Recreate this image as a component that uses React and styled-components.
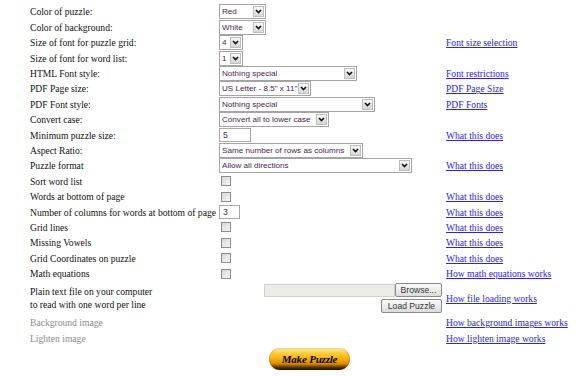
import React from "react";
import styled, { createGlobalStyle } from "styled-components";

const Global = createGlobalStyle`
  html, body { margin: 0; padding: 0; background: #fff; }
  body { font-family: "Liberation Serif", "Times New Roman", serif; }
`;

const Page = styled.div`
  width: 580px;
  height: 376px;
  box-sizing: border-box;
  padding: 4.3px 0 0 30px;
  overflow: hidden;
`;

const Form = styled.div`
  display: flex;
  flex-direction: column;
`;

const Row = styled.div`
  display: grid;
  grid-template-columns: 189px 227px 1fr;
  align-items: center;
  height: ${(p) => p.$h || 15.4}px;
`;

const Label = styled.div`
  font-size: 9.6px;
  line-height: 13px;
  color: ${(p) => (p.$muted ? "#8a8a8a" : "#111")};
  white-space: nowrap;
`;

const Cell = styled.div`
  display: flex;
  align-items: center;
`;

const Link = styled.a`
  font-size: 9.6px;
  color: #2a22f5;
  text-decoration: underline;
  white-space: nowrap;
  cursor: pointer;
`;

const SelectBox = styled.div`
  display: inline-flex;
  align-items: center;
  box-sizing: border-box;
  width: ${(p) => p.$w}px;
  height: 15px;
  border: 1px solid #a4a4a4;
  background: #fff;
  padding: 0 1px 0 2px;
  font: 8.1px "Liberation Sans", Arial, sans-serif;
  color: #4d2450;
`;

const SelectText = styled.span`
  flex: 1;
  white-space: nowrap;
  overflow: hidden;
`;

const ArrowBtn = styled.span`
  display: flex;
  flex: none;
  align-items: center;
  justify-content: center;
  box-sizing: border-box;
  width: 11px;
  height: 11px;
  border: 1px solid #bdbdbd;
  background: linear-gradient(#f8f8f8, #d6d6d6);
`;

const TextBox = styled.div`
  box-sizing: border-box;
  width: ${(p) => p.$w}px;
  height: 14px;
  border: 1px solid #a8a8a8;
  background: #fff;
  padding-left: 3px;
  font: 8.6px/12px "Liberation Sans", Arial, sans-serif;
  color: #4d2450;
`;

const Check = styled.span`
  display: inline-block;
  box-sizing: border-box;
  width: 10px;
  height: 10px;
  margin-left: 2px;
  border: 1px solid #8d8d8d;
  background: linear-gradient(135deg, #d8d8d8, #f6f6f6);
`;

const FileCell = styled.div`
  display: flex;
  flex-direction: column;
  align-items: flex-end;
  gap: 2px;
  padding-right: 4px;
`;

const FileLine = styled.div`
  display: flex;
  align-items: center;
`;

const FileField = styled.div`
  box-sizing: border-box;
  width: 131px;
  height: 13px;
  border: 1px solid #cfcfcb;
  background: #ecebe6;
`;

const GrayButton = styled.button`
  box-sizing: border-box;
  width: ${(p) => p.$w}px;
  height: 14px;
  padding: 0;
  border: 1px solid #8a8a8a;
  border-radius: 2px;
  background: linear-gradient(#fbfbfb, #dcdcdc);
  font: 8.6px "Liberation Sans", Arial, sans-serif;
  color: #333;
`;

const Footer = styled.div`
  display: flex;
  padding: 2.3px 0 0 239px;
`;

const MakeButton = styled.button`
  width: 81px;
  height: 22px;
  padding: 0 0 1px 0;
  border: none;
  border-radius: 11px;
  background: linear-gradient(
    to bottom,
    #fff1a8 0%,
    #ffd040 22%,
    #f8ab0c 52%,
    #d98a00 72%,
    #5a3200 88%,
    #140a00 100%
  );
  box-shadow: inset 0 0 2px rgba(120, 70, 0, 0.5);
  font: italic 900 11px "Liberation Serif", "Times New Roman", serif;
  color: #000;
  letter-spacing: -0.2px;
`;

const Chevron = () => (
  <svg width="7" height="5" viewBox="0 0 7 5">
    <path d="M1 1 L3.5 3.6 L6 1" fill="none" stroke="#111" strokeWidth="1.6" />
  </svg>
);

const Select = ({ w, children }) => (
  <SelectBox $w={w}>
    <SelectText>{children}</SelectText>
    <ArrowBtn>
      <Chevron />
    </ArrowBtn>
  </SelectBox>
);

const rows = [
  { label: "Color of puzzle:", ctl: <Select w={47}>Red</Select> },
  { label: "Color of background:", ctl: <Select w={47}>White</Select> },
  { label: "Size of font for puzzle grid:", ctl: <Select w={24}>4</Select>, link: "Font size selection" },
  { label: "Size of font for word list:", ctl: <Select w={24}>1</Select> },
  { label: "HTML Font style:", ctl: <Select w={138}>Nothing special</Select>, link: "Font restrictions" },
  { label: "PDF Page size:", ctl: <Select w={92}>US Letter - 8.5" x 11"</Select>, link: "PDF Page Size" },
  { label: "PDF Font style:", ctl: <Select w={156}>Nothing special</Select>, link: "PDF Fonts" },
  { label: "Convert case:", ctl: <Select w={110}>Convert all to lower case</Select> },
  { label: "Minimum puzzle size:", ctl: <TextBox $w={32}>5</TextBox>, link: "What this does" },
  { label: "Aspect Ratio:", ctl: <Select w={144}>Same number of rows as columns</Select> },
  { label: "Puzzle format", ctl: <Select w={193}>Allow all directions</Select>, link: "What this does" },
  { label: "Sort word list", ctl: <Check /> },
  { label: "Words at bottom of page", ctl: <Check />, link: "What this does" },
  { label: "Number of columns for words at bottom of page", ctl: <TextBox $w={21}>3</TextBox>, link: "What this does" },
  { label: "Grid lines", ctl: <Check />, link: "What this does" },
  { label: "Missing Vowels", ctl: <Check />, link: "What this does" },
  { label: "Grid Coordinates on puzzle", ctl: <Check />, link: "What this does" },
  { label: "Math equations", ctl: <Check />, link: "How math equations works" },
];

export default function App() {
  return (
    <>
      <Global />
      <Page>
        <Form>
          {rows.map((r) => (
            <Row key={r.label}>
              <Label>{r.label}</Label>
              <Cell>{r.ctl}</Cell>
              <Cell>{r.link && <Link>{r.link}</Link>}</Cell>
            </Row>
          ))}
          <Row $h={33.6}>
            <Label>
              Plain text file on your computer
              <br />
              to read with one word per line
            </Label>
            <FileCell>
              <FileLine>
                <FileField />
                <GrayButton $w={47}>Browse...</GrayButton>
              </FileLine>
              <GrayButton $w={61}>Load Puzzle</GrayButton>
            </FileCell>
            <Cell>
              <Link>How file loading works</Link>
            </Cell>
          </Row>
          <Row>
            <Label $muted>Background image</Label>
            <Cell />
            <Cell>
              <Link>How background images works</Link>
            </Cell>
          </Row>
          <Row>
            <Label $muted>Lighten image</Label>
            <Cell />
            <Cell>
              <Link>How lighten image works</Link>
            </Cell>
          </Row>
        </Form>
        <Footer>
          <MakeButton>Make Puzzle</MakeButton>
        </Footer>
      </Page>
    </>
  );
}
